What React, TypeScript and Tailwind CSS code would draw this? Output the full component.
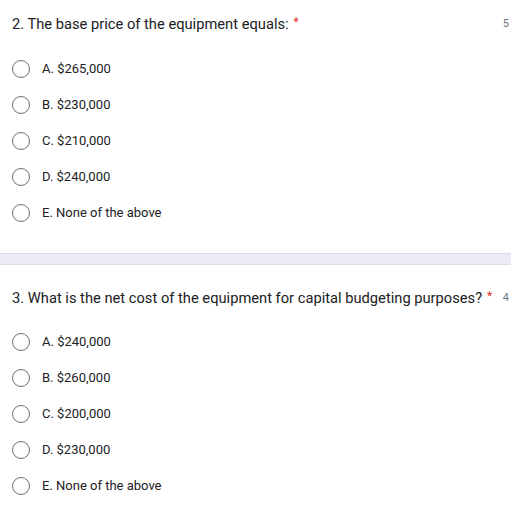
const QUESTIONS = [
  {
    title: "2. The base price of the equipment equals:",
    points: "5",
    options: ["A. $265,000", "B. $230,000", "C. $210,000", "D. $240,000", "E. None of the above"],
  },
  {
    title: "3. What is the net cost of the equipment for capital budgeting purposes?",
    points: "4",
    options: ["A. $240,000", "B. $260,000", "C. $200,000", "D. $230,000", "E. None of the above"],
  },
];

function Radio() {
  return <div className="w-[18px] h-[18px] rounded-full border-[1.5px] border-[#6b6f74] shrink-0" />;
}

function Question({ q, first }: { q: (typeof QUESTIONS)[number]; first: boolean }) {
  return (
    <div className={`bg-white pl-3 ${first ? "pt-[14px] pb-[22px]" : "pt-[23px] pb-[6px]"}`}>
      <div className="flex items-center h-5 whitespace-nowrap">
        <span className="text-[14.7px] text-[#202124]">{q.title}</span>
        <span className="text-[#d93025] text-[12px] ml-[5px] -mt-1 shrink-0">*</span>
        <span className="ml-auto pl-2 pr-[2px] text-[11px] text-[#70757a] shrink-0">{q.points}</span>
      </div>
      <div className={`flex flex-col ${first ? "mt-[17px]" : "mt-4"}`}>
        {q.options.map((o) => (
          <div key={o} className="h-9 flex items-center">
            <Radio />
            <span className="ml-[12px] text-[13px] text-[#202124]">{o}</span>
          </div>
        ))}
      </div>
    </div>
  );
}

export default function App() {
  return (
    <div
      className="w-[511px] h-[509px] overflow-hidden bg-white"
      style={{ fontFamily: "Roboto, 'Liberation Sans', sans-serif" }}
    >
      <Question q={QUESTIONS[0]} first />
      <div className="h-[12px] bg-[#ede9f7] border-y border-[#dadce0]" />
      <Question q={QUESTIONS[1]} first={false} />
    </div>
  );
}
